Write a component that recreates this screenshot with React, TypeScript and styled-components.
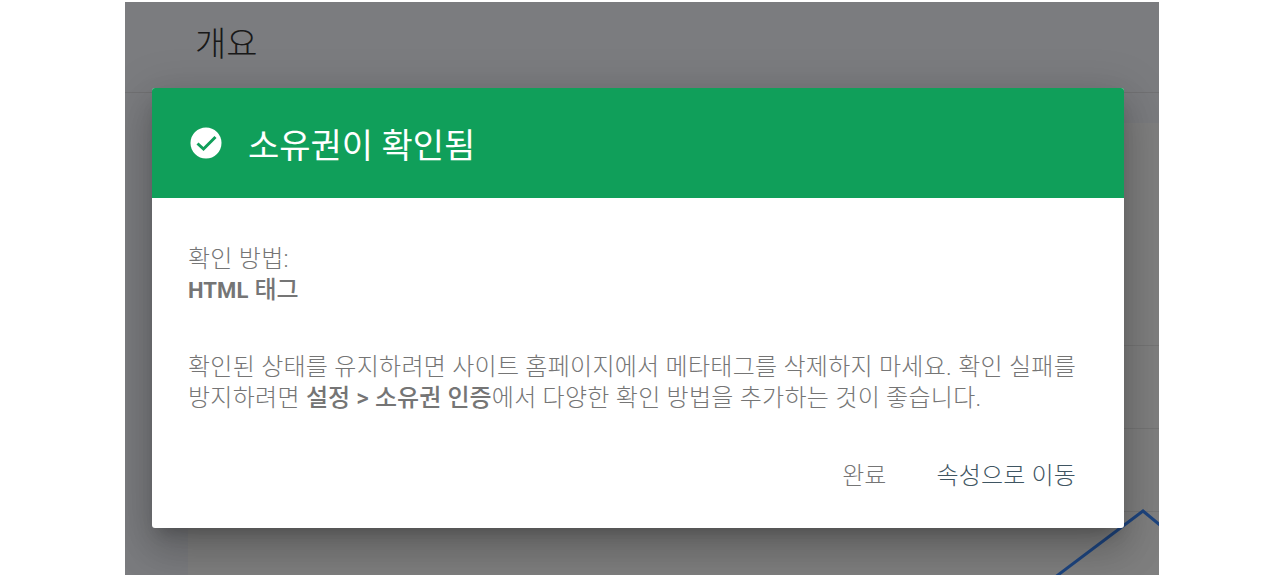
import React from "react";
import styled, { createGlobalStyle } from "styled-components";

const Global = createGlobalStyle`
  html, body { margin: 0; padding: 0; background: #fff; }
  body { font-family: Roboto, "Noto Sans CJK KR", sans-serif; }
`;

const Page = styled.div`
  position: relative;
  width: 1034px;
  height: 573px;
  margin: 2px 0 0 125px;
  background: #f6f8fe;
  overflow: hidden;
`;

const Header = styled.header`
  box-sizing: border-box;
  height: 91px;
  padding: 20px 0 0 70px;
  border-bottom: 1px solid #e2e3e6;
`;

const PageTitle = styled.h1`
  margin: 0;
  font-size: 34px;
  line-height: 44px;
  font-weight: 300;
  color: #333;
`;

const Card = styled.section`
  position: relative;
  margin: 30px 0 0 63px;
  background: #fff;
  height: 452px;
`;

const CardRow = styled.div<{ $h: number }>`
  box-sizing: border-box;
  height: ${(p) => p.$h}px;
  border-bottom: 1px solid #ebebeb;
`;

const Chart = styled.svg`
  position: absolute;
  left: 800px;
  top: 340px;
  width: 171px;
  height: 112px;
`;

const Scrim = styled.div`
  position: absolute;
  inset: 0;
  background: rgba(0, 0, 0, 0.5);
  padding: 86px 0 0 27px;
  box-sizing: border-box;
`;

const Dialog = styled.div`
  width: 972px;
  height: 440px;
  background: #fff;
  border-radius: 3px;
  overflow: hidden;
  box-shadow: 0 11px 15px -7px rgba(0, 0, 0, 0.2), 0 24px 38px 3px rgba(0, 0, 0, 0.14), 0 9px 46px 8px rgba(0, 0, 0, 0.12);
  display: flex;
  flex-direction: column;
`;

const DialogHeader = styled.div`
  height: 110px;
  background: #109f5a;
  display: flex;
  align-items: center;
  padding-left: 38px;
  gap: 26px;
  flex: none;
`;

const DialogTitle = styled.h2`
  margin: 0;
  font-size: 34px;
  line-height: 40px;
  font-weight: 400;
  color: #fff;
  position: relative;
  top: 3px;
`;

const DialogBody = styled.div`
  padding: 46px 36px 0;
  flex: 1;
  font-size: 24px;
  line-height: 31px;
  letter-spacing: 0.27px;
  font-weight: 300;
  color: #757575;
`;

const Method = styled.div`
  margin-bottom: 46px;
`;

const Strong = styled.b`
  font-weight: 500;
  letter-spacing: 0.09px;
`;

const Latin = styled.span`
  font-size: 22px;
  font-weight: 700;
`;

const Actions = styled.div`
  display: flex;
  justify-content: flex-end;
  gap: 50px;
  padding: 0 48px 37px 0;
  font-size: 24px;
  line-height: 30px;
  font-weight: 300;
  letter-spacing: 0.15px;
`;

const Action = styled.button<{ $primary?: boolean }>`
  border: 0;
  background: none;
  padding: 0;
  font: inherit;
  letter-spacing: inherit;
  color: ${(p) => (p.$primary ? "#3f5562" : "#757575")};
`;

export default function App() {
  return (
    <>
      <Global />
      <Page>
        <Header>
          <PageTitle>개요</PageTitle>
        </Header>
        <Card>
          <CardRow $h={223} />
          <CardRow $h={83} />
          <CardRow $h={83} />
          <Chart viewBox="0 0 171 112">
            <polyline points="66,115 155,48 175,64.5" fill="none" stroke="#3d8bff" strokeWidth="3" />
          </Chart>
        </Card>
        <Scrim>
          <Dialog>
            <DialogHeader>
              <svg width="32" height="32" viewBox="0 0 32 32">
                <circle cx="16" cy="16" r="15.5" fill="#fff" />
                <polyline points="7.5,16.5 13.5,22 25.5,10" fill="none" stroke="#109f5a" strokeWidth="3" />
              </svg>
              <DialogTitle>소유권이 확인됨</DialogTitle>
            </DialogHeader>
            <DialogBody>
              <Method>
                확인 방법:
                <br />
                <Strong>
                  <Latin>HTML</Latin> 태그
                </Strong>
              </Method>
              <div>
                확인된 상태를 유지하려면 사이트 홈페이지에서 메타태그를 삭제하지 마세요. 확인 실패를
                <br />
                방지하려면 <Strong>설정 &gt; 소유권 인증</Strong>에서 다양한 확인 방법을 추가하는 것이 좋습니다.
              </div>
            </DialogBody>
            <Actions>
              <Action>완료</Action>
              <Action $primary>속성으로 이동</Action>
            </Actions>
          </Dialog>
        </Scrim>
      </Page>
    </>
  );
}
